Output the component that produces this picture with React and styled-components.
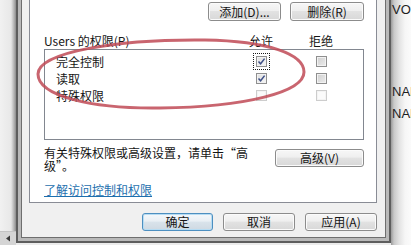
import React from 'react';
import styled, { createGlobalStyle } from 'styled-components';

const Global = createGlobalStyle`
  html, body { margin: 0; padding: 0; background: #ededed; }
  body { font-family: "Noto Sans CJK SC", "Noto Sans", sans-serif; }
`;

const Screen = styled.div`
  position: relative;
  width: 411px;
  height: 245px;
  overflow: hidden;
  display: flex;
  background: #ececec;
  font-size: 12px;
  color: #151515;
  font-family: "Noto Sans CJK SC", "Noto Sans", sans-serif;
`;

const LeftGutter = styled.div`
  flex: none;
  width: 16px;
  display: flex;
  flex-direction: column;
  justify-content: flex-end;
  background: linear-gradient(to right, #f1f1f1 0, #e8e8e8 11px, #b4b4b4 14px, #8c8c8c 16px);
`;

const ScrollArrow = styled.div`
  height: 13px;
  background: #d5d5d5;
  border-top: 1px solid #c4c4c4;
  display: flex;
  align-items: center;
  justify-content: center;
`;

const DialogColumn = styled.div`
  flex: none;
  width: 375px;
  display: flex;
  flex-direction: column;
`;

const Dialog = styled.div`
  box-sizing: border-box;
  height: 243px;
  border: 2px solid #5e5e5e;
  border-top: 0;
  background: #b9b9b9;
  padding: 0 3px 3px;
  display: flex;
`;

const Face = styled.div`
  flex: 1;
  border: 1px solid #6e6e6e;
  border-top: 0;
  background: #f0f0f0;
  padding: 0 8px 0 7px;
  display: flex;
  flex-direction: column;
`;

const TabPanel = styled.div`
  box-sizing: border-box;
  height: 203px;
  flex: none;
  border: 1px solid #898c95;
  border-top: 0;
  background: #fff;
  padding: 2px 12px 0 14px;
  display: flex;
  flex-direction: column;
`;

const ButtonRow = styled.div`
  display: flex;
  justify-content: flex-end;
  gap: 9px;
`;

const Button = styled.button`
  box-sizing: border-box;
  flex: none;
  height: ${p => p.$h || 18}px;
  width: ${p => p.$w}px;
  margin-top: ${p => p.$mt || 0}px;
  padding: 0;
  border: 1px solid ${p => (p.$default ? '#4d8fc0' : '#8c8c8c')};
  border-radius: 3px;
  background: ${p =>
    p.$default
      ? 'linear-gradient(#f4f8fb, #e9eff4 45%, #d9e3eb 50%, #cfd9e2)'
      : 'linear-gradient(#f7f7f7, #efefef 45%, #e2e2e2 50%, #d8d8d8)'};
  box-shadow: inset 0 0 0 1px ${p => (p.$default ? '#b6dcf3' : '#fbfbfb')};
  font: 12px/16px "Noto Sans CJK SC", "Noto Sans", sans-serif;
  color: #151515;
  white-space: nowrap;
`;

const HeaderRow = styled.div`
  margin-top: 13px;
  height: 14px;
  line-height: 14px;
  display: grid;
  grid-template-columns: 1fr 60px 60px;
  padding-right: 13px;
`;

const ColHead = styled.span`
  text-align: center;
`;

const ListBox = styled.div`
  box-sizing: border-box;
  margin-top: 1px;
  height: 91px;
  border: 1px solid #828790;
  padding: 3px 12px 0 11px;
  display: flex;
  flex-direction: column;
`;

const PermRow = styled.div`
  height: 17px;
  line-height: 17px;
  display: grid;
  grid-template-columns: 1fr 60px 60px;
  align-items: center;
`;

const Check = styled.span`
  justify-self: center;
  box-sizing: border-box;
  width: 11px;
  height: 11px;
  border: 1px solid ${p => (p.$disabled ? '#cdcdcd' : '#8f8f8f')};
  background: ${p =>
    p.$disabled
      ? '#fbfbfb'
      : p.$checked
      ? 'linear-gradient(135deg, #dedede, #f7f7f7)'
      : 'linear-gradient(135deg, #cfcfcf, #ececec)'};
  box-shadow: inset 0 0 0 1px ${p => (p.$disabled ? '#f4f4f4' : '#f2f2f2')};
  display: flex;
  align-items: center;
  justify-content: center;
  outline: ${p => (p.$focus ? '1px dotted #1a1a1a' : 'none')};
  outline-offset: 2px;
`;

const NoteRow = styled.div`
  margin-top: 6px;
  display: flex;
  justify-content: space-between;
  align-items: flex-start;
`;

const Note = styled.p`
  margin: 0;
  width: 208px;
  line-height: 13px;
`;

const HelpLink = styled.a`
  margin-top: 11px;
  align-self: flex-start;
  line-height: 14px;
  color: #1d6fae;
  text-decoration: underline;
  cursor: pointer;
`;

const Footer = styled.div`
  padding-top: 10px;
  display: flex;
  justify-content: flex-end;
  gap: 10px;
`;

const RightGutter = styled.div`
  flex: 1;
  min-width: 0;
  overflow: hidden;
  white-space: nowrap;
  padding-left: 1px;
  display: flex;
  flex-direction: column;
  background: linear-gradient(to right, #9a9a9a 0, #c9c9c9 3px, #e2e2e2 8px, #f6f6f6 14px, #fbfbfb 20px);
  font-family: "Liberation Sans", Arial, sans-serif;
  font-size: 13px;
  color: #1e1e1e;
`;

const BgText = styled.div`
  line-height: 14px;
  margin-top: ${p => p.$mt}px;
`;

const Overlay = styled.svg`
  position: absolute;
  left: 0;
  top: 0;
  pointer-events: none;
`;

const Tick = () => (
  <svg width="9" height="9" viewBox="0 0 9 9">
    <path d="M1.5 4.5 L3.6 6.8 L7.6 1.6" fill="none" stroke="#3d4f86" strokeWidth="1.5" />
  </svg>
);

const perms = [
  { name: '完全控制', allow: true, deny: false, focus: true },
  { name: '读取', allow: true, deny: false },
  { name: '特殊权限', allow: false, deny: false, disabled: true },
];

export default function App() {
  return (
    <>
      <Global />
      <Screen>
        <LeftGutter>
          <ScrollArrow>
            <svg width="6" height="7" viewBox="0 0 6 7">
              <path d="M5 0.5 L1 3.5 L5 6.5 Z" fill="#3a3a3a" />
            </svg>
          </ScrollArrow>
        </LeftGutter>
        <DialogColumn>
          <Dialog>
            <Face>
              <TabPanel>
                <ButtonRow>
                  <Button $w={73} $h={19}>添加(D)...</Button>
                  <Button $w={74} $h={19}>删除(R)</Button>
                </ButtonRow>
                <HeaderRow>
                  <span>Users 的权限(P)</span>
                  <ColHead>允许</ColHead>
                  <ColHead>拒绝</ColHead>
                </HeaderRow>
                <ListBox>
                  {perms.map(p => (
                    <PermRow key={p.name}>
                      <span>{p.name}</span>
                      <Check $checked={p.allow} $disabled={p.disabled} $focus={p.focus}>
                        {p.allow && <Tick />}
                      </Check>
                      <Check $checked={p.deny} $disabled={p.disabled} />
                    </PermRow>
                  ))}
                </ListBox>
                <NoteRow>
                  <Note>有关特殊权限或高级设置，请单击“高级”。</Note>
                  <Button $w={89} $mt={3}>高级(V)</Button>
                </NoteRow>
                <HelpLink>了解访问控制和权限</HelpLink>
              </TabPanel>
              <Footer>
                <Button $w={71} $default>确定</Button>
                <Button $w={72}>取消</Button>
                <Button $w={72}>应用(A)</Button>
              </Footer>
            </Face>
          </Dialog>
        </DialogColumn>
        <RightGutter>
          <BgText $mt={3}>VOF</BgText>
          <BgText $mt={68}>NAR</BgText>
          <BgText $mt={8}>NAR</BgText>
        </RightGutter>
        <Overlay width="411" height="245" viewBox="0 0 411 245">
          <path
            d="M38 74 C38 52 118 39 205 40 C268 41 304 54 304 72 C304 92 246 107 160 108 C92 109 38 96 38 74 Z"
            fill="none"
            stroke="#bf4a56"
            strokeOpacity="0.85"
            strokeWidth="3"
          />
        </Overlay>
      </Screen>
    </>
  );
}
